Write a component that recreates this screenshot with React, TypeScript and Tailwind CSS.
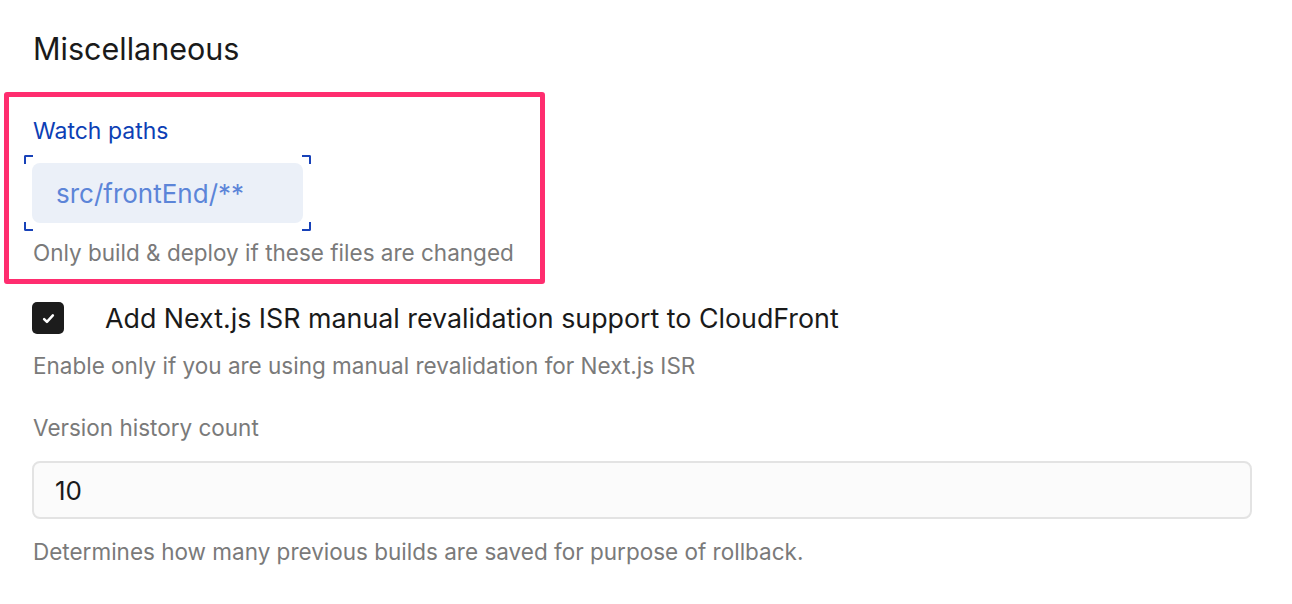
import React from "react";

function Bracket({ pos }: { pos: "tl" | "tr" | "bl" | "br" }) {
  const map: Record<string, string> = {
    tl: "top-0 left-0 border-t-2 border-l-2 rounded-tl-[2px]",
    tr: "top-0 right-0 border-t-2 border-r-2 rounded-tr-[2px]",
    bl: "bottom-0 left-0 border-b-2 border-l-2 rounded-bl-[2px]",
    br: "bottom-0 right-0 border-b-2 border-r-2 rounded-br-[2px]",
  };
  return <span className={`absolute w-[9px] h-[9px] border-[#1842b8] ${map[pos]}`} />;
}

export default function App() {
  return (
    <div
      className="w-[1292px] h-[604px] bg-white overflow-hidden"
      style={{ fontFamily: "Inter, 'Liberation Sans', sans-serif" }}
    >
      <div className="pt-[31px] pl-[33px] pr-[40px]">
        <h2 className="text-[30.5px] leading-[36px] text-[#1a1a1a] font-normal">Miscellaneous</h2>

        <div className="mt-[25px] ml-[-29px] w-[541px] h-[192px] border-[5px] border-[#ff2d6f] rounded-[3px] pl-[24px] pt-[20px]">
          <div className="text-[23px] leading-[28px] text-[#0d3fb5]">Watch paths</div>
          <div className="relative mt-[10px] ml-[-9px] w-[287px] h-[76px] p-[8px]">
            <Bracket pos="tl" />
            <Bracket pos="tr" />
            <Bracket pos="bl" />
            <Bracket pos="br" />
            <div className="h-full bg-[#ebf0f8] rounded-[8px] flex items-center pl-[24px] text-[26px] text-[#5c85d8]">
              src/frontEnd/**
            </div>
          </div>
          <div className="mt-[8px] text-[22.5px] leading-[28px] text-[#7a7a7a] whitespace-nowrap">
            Only build &amp; deploy if these files are changed
          </div>
        </div>

        <div className="mt-[18px] ml-[-1px] flex items-center gap-[41px]">
          <div className="w-[32px] h-[32px] rounded-[5px] bg-[#1c1c1c] flex items-center justify-center">
            <svg width="15" height="15" viewBox="0 0 24 24" fill="none" stroke="white" strokeWidth="4" strokeLinecap="round" strokeLinejoin="round">
              <path d="M5 13l4.5 4.5L19 7" />
            </svg>
          </div>
          <div className="text-[26.8px] leading-[32px] text-[#1a1a1a] whitespace-nowrap">
            Add Next.js ISR manual revalidation support to CloudFront
          </div>
        </div>
        <div className="mt-[18px] text-[22.5px] leading-[28px] text-[#7a7a7a] whitespace-nowrap">
          Enable only if you are using manual revalidation for Next.js ISR
        </div>

        <div className="mt-[34px] text-[22.5px] leading-[28px] text-[#7a7a7a]">Version history count</div>
        <div className="mt-[19px] ml-[-1px] w-[1220px] h-[58px] border-2 border-[#e3e3e3] bg-[#fbfbfb] rounded-[8px] flex items-center pl-[21px] text-[26px] text-[#1a1a1a]">
          10
        </div>
        <div className="mt-[19px] text-[22.5px] leading-[28px] text-[#7a7a7a] whitespace-nowrap">
          Determines how many previous builds are saved for purpose of rollback.
        </div>
      </div>
    </div>
  );
}
